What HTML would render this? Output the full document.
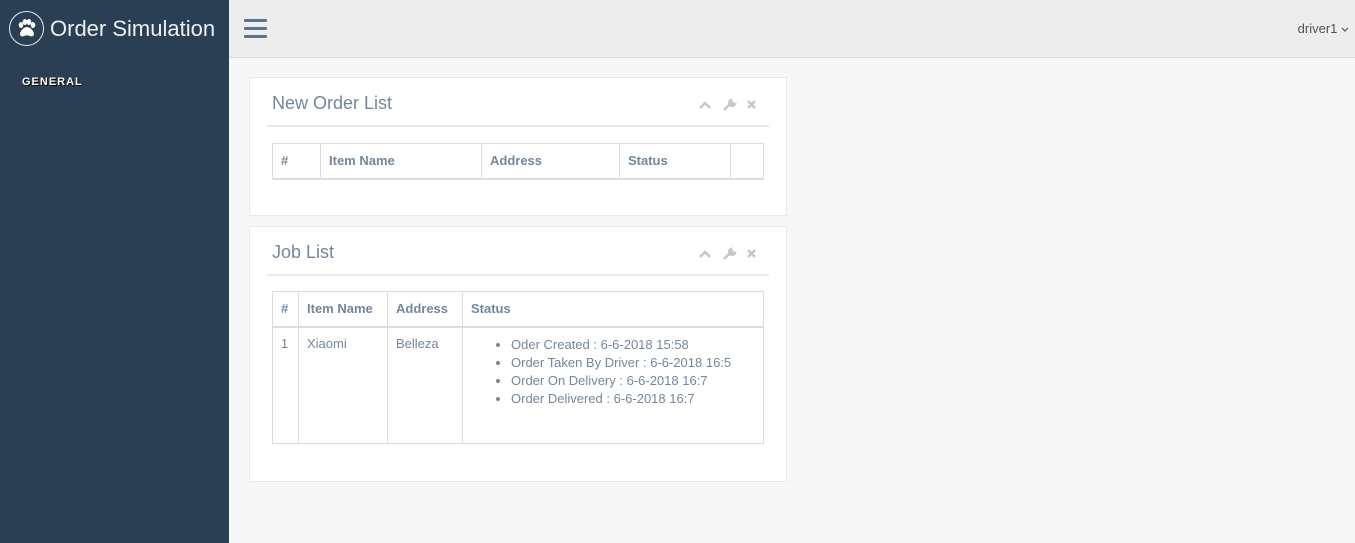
<!DOCTYPE html>
<html><head><style>
*{box-sizing:border-box;margin:0;padding:0}
body{width:1355px;height:543px;background:#F7F7F7;font-family:"Liberation Sans",sans-serif;color:#73879C;font-size:13px;position:relative;overflow:hidden}
.side{position:absolute;left:0;top:0;width:229px;height:543px;background:#2A3F54}
.logo{position:absolute;left:9px;top:11px;width:35px;height:35px;border:1px solid #EAEAEA;border-radius:50%}
.brand{position:absolute;left:50px;top:16px;color:#ECF0F1;font-size:22px}
.gen{position:absolute;left:22px;top:76px;color:#fff;font-weight:bold;font-size:11px;letter-spacing:1px;text-shadow:1px 1px #000}
.top{position:absolute;left:229px;top:0;right:0;height:58px;background:#EDEDED;border-bottom:1px solid #D9DEE4}
.ham{position:absolute;left:15px;top:19px;width:23px}
.ham i{display:block;height:3px;background:#5A738E;margin-bottom:5px;border-radius:1px}
.user{position:absolute;right:6px;top:21px;color:#515356;font-size:13px}
.panel{position:absolute;left:249px;width:538px;background:#fff;border:1px solid #E6E9ED}
.title{position:absolute;left:22px;top:15px;font-size:18px;color:#73879C}
.line{position:absolute;left:17px;right:17px;top:47px;height:2px;background:#E6E9ED}
.tools{position:absolute;left:448px;top:20px}
table{position:absolute;left:22px;border-collapse:collapse;width:492px}
td,th{border:1px solid #ddd;text-align:left;padding:8px}
th{height:35px;padding:6px 8px;border-bottom:2px solid #ddd;font-weight:bold}
ul{padding-left:40px;line-height:18px}
</style></head><body>
<div class="side">
<div class="logo"><svg width="33" height="33" viewBox="0 0 33 33"><g fill="#fff"><ellipse cx="11" cy="13" rx="2.3" ry="3"/><ellipse cx="15" cy="10" rx="2.3" ry="3"/><ellipse cx="19" cy="10" rx="2.3" ry="3"/><ellipse cx="23" cy="13" rx="2.3" ry="3"/><path d="M17 15c-4 0-7 5-7 7s2 3 4 2 4-1 6 0 4 0 4-2-3-7-7-7z"/></g></svg></div>
<div class="brand">Order Simulation</div>
<div class="gen">GENERAL</div>
</div>
<div class="top"><div class="ham"><i></i><i></i><i></i></div><div class="user">driver1 <svg width="8" height="6" viewBox="0 0 8 6"><path d="M1 1l3 3 3-3" stroke="#515356" fill="none" stroke-width="1.2"/></svg></div></div>
<div class="panel" style="top:77px;height:139px">
<div class="title">New Order List</div>
<svg class="tools" width="60" height="14" viewBox="0 0 60 14"><g stroke="#C5C7CB" stroke-width="2.5" fill="none"><path d="M2 10l5-5 5 5"/><path d="M50 3l7 7M57 3l-7 7"/></g><path d="M26 12l6-6M33 2a3 3 0 1 0 4 4l-2-0.5-1.5-1.5z" stroke="#C5C7CB" stroke-width="2.5" fill="#C5C7CB"/></svg>
<div class="line"></div>
<table style="top:65px"><tr><th style="width:48px">#</th><th style="width:161px">Item Name</th><th style="width:138px">Address</th><th style="width:111px">Status</th><th></th></tr></table>
</div>
<div class="panel" style="top:226px;height:256px">
<div class="title">Job List</div>
<svg class="tools" width="60" height="14" viewBox="0 0 60 14"><g stroke="#C5C7CB" stroke-width="2.5" fill="none"><path d="M2 10l5-5 5 5"/><path d="M50 3l7 7M57 3l-7 7"/></g><path d="M26 12l6-6M33 2a3 3 0 1 0 4 4l-2-0.5-1.5-1.5z" stroke="#C5C7CB" stroke-width="2.5" fill="#C5C7CB"/></svg>
<div class="line"></div>
<table style="top:64px"><tr><th style="width:26px">#</th><th style="width:89px">Item Name</th><th style="width:75px">Address</th><th>Status</th></tr>
<tr style="height:117px;vertical-align:top"><td>1</td><td>Xiaomi</td><td>Belleza</td><td style="padding-top:8px"><ul><li>Oder Created : 6-6-2018 15:58</li><li>Order Taken By Driver : 6-6-2018 16:5</li><li>Order On Delivery : 6-6-2018 16:7</li><li>Order Delivered : 6-6-2018 16:7</li></ul></td></tr></table>
</div>
</body></html>
